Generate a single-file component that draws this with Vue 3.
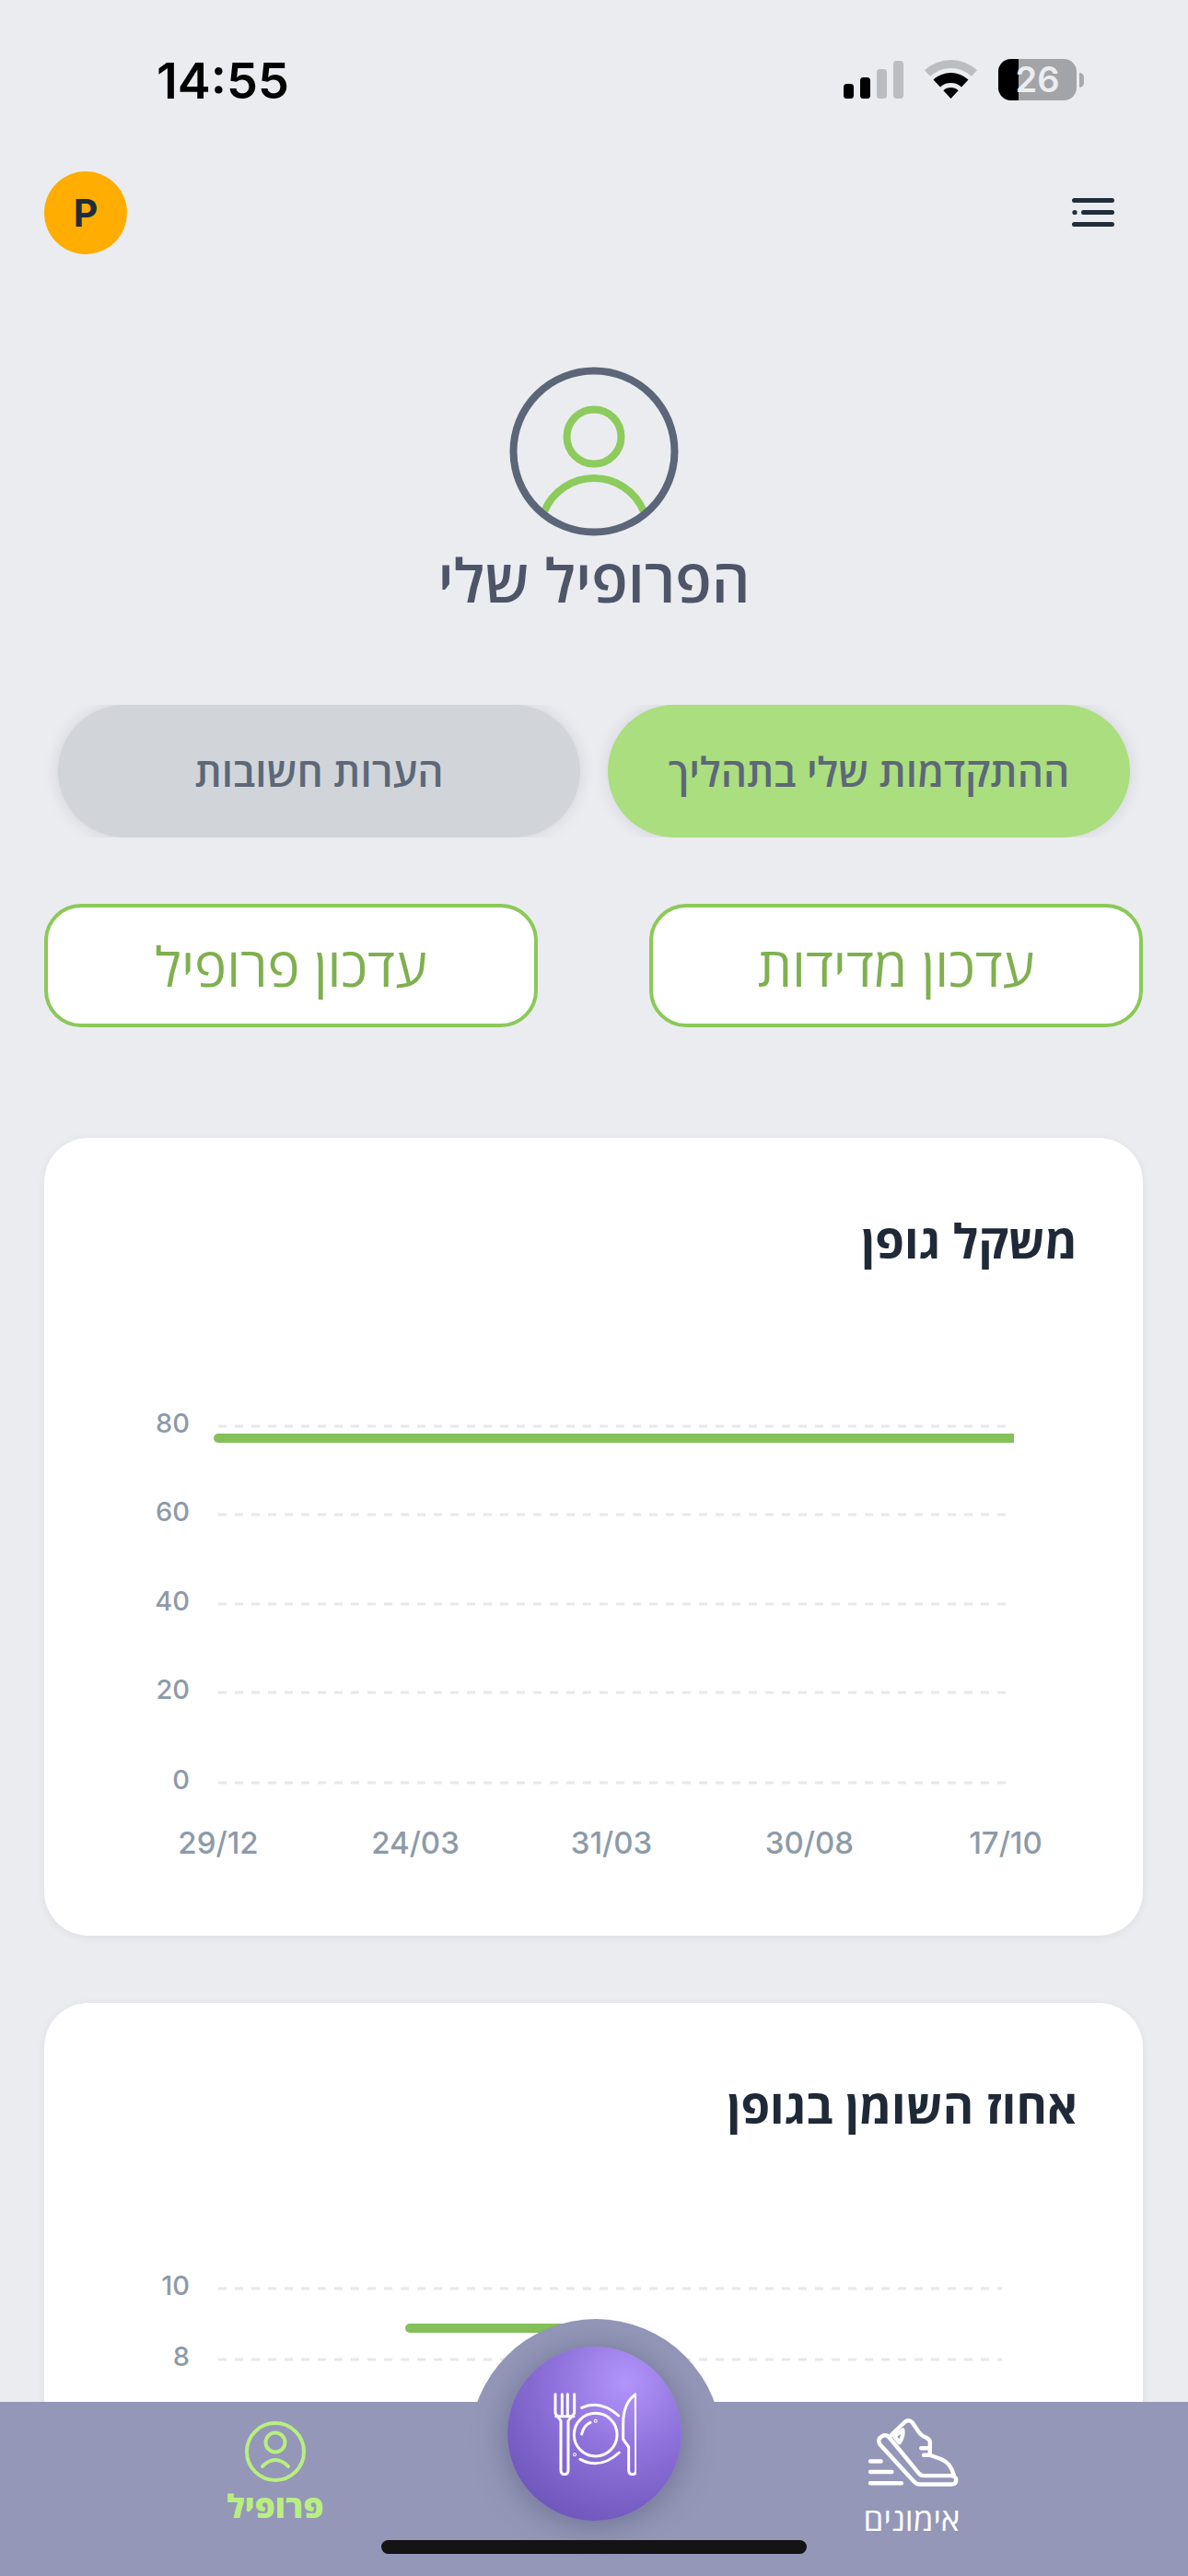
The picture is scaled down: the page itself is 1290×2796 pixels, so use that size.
<script setup>
const charts = [
  {
    title: 'משקל גופן',
    height: 866,
    grid: [
      { label: '80', y: 313 },
      { label: '60', y: 409 },
      { label: '40', y: 506 },
      { label: '20', y: 602 },
      { label: '0', y: 700 }
    ],
    gridEnd: 1044,
    line: { x1: 189, x2: 1053, y: 326 },
    dates: [
      { label: '29/12', x: 189 },
      { label: '24/03', x: 403 },
      { label: '31/03', x: 616 },
      { label: '30/08', x: 831 },
      { label: '17/10', x: 1044 }
    ],
    dateY: 777
  },
  {
    title: 'אחוז השומן בגופן',
    height: 866,
    grid: [
      { label: '10', y: 310 },
      { label: '8', y: 387 },
      { label: '6', y: 464 }
    ],
    gridEnd: 1040,
    line: { x1: 397, x2: 600, y: 353 },
    dates: [],
    dateY: 777
  }
]
</script>

<template>
  <div class="page">
    <div class="status">
      <span class="time">14:55</span>
      <div class="status-icons">
        <svg class="signal" width="65" height="41" viewBox="0 0 65 41">
          <rect x="0" y="25" width="11" height="16" rx="3.5" fill="#000" />
          <rect x="18" y="18" width="11" height="23" rx="3.5" fill="#000" />
          <rect x="36" y="9" width="11" height="32" rx="3.5" fill="#bcbdc1" />
          <rect x="54" y="0" width="11" height="41" rx="3.5" fill="#bcbdc1" />
        </svg>
        <svg class="wifi" width="57" height="42" viewBox="0 0 57 42">
          <path d="M0 11.15A42 42 0 0 1 57 11.15L50.9 17.8A33 33 0 0 0 6.1 17.8Z" fill="#bcbdc1" />
          <path d="M9.5 21.4A28 28 0 0 1 47.5 21.4L40 29.5A17 17 0 0 0 17 29.5Z" fill="#000" />
          <path d="M20.4 33.2A12 12 0 0 1 36.6 33.2L28.5 42Z" fill="#000" />
        </svg>
        <div class="battery">
          <div class="battery-body">
            <div class="battery-fill"></div>
            <span class="battery-text">26</span>
          </div>
          <div class="battery-tip"></div>
        </div>
      </div>
    </div>

    <div class="topbar">
      <div class="avatar">P</div>
      <svg class="menu" width="47" height="32" viewBox="0 0 47 32">
        <rect x="0" y="0" width="46" height="5" rx="2.5" fill="#212d3b" />
        <circle cx="3" cy="15.5" r="2.6" fill="#212d3b" />
        <rect x="10" y="13" width="36" height="5" rx="2.5" fill="#212d3b" />
        <rect x="0" y="26" width="46" height="5" rx="2.5" fill="#212d3b" />
      </svg>
    </div>

    <div class="hero">
      <svg width="184" height="184" viewBox="0 0 184 184">
        <circle cx="92" cy="76" r="29.5" fill="none" stroke="#8ccb5c" stroke-width="8" />
        <path d="M38 157A58.5 58.5 0 0 1 146 157" fill="none" stroke="#8ccb5c" stroke-width="8" />
        <circle cx="92" cy="92" r="87.5" fill="none" stroke="#5b6678" stroke-width="8" />
      </svg>
      <h1 class="hero-title">הפרופיל שלי</h1>
    </div>

    <div class="tabs">
      <button class="tab tab-active">ההתקדמות שלי בתהליך</button>
      <button class="tab tab-idle">הערות חשובות</button>
    </div>

    <div class="actions">
      <button class="action">עדכון מדידות</button>
      <button class="action">עדכון פרופיל</button>
    </div>

    <section v-for="chart in charts" :key="chart.title" class="card">
      <h2 class="card-title">{{ chart.title }}</h2>
      <svg class="chart" width="1193" :height="chart.height" :viewBox="`0 0 1193 ${chart.height}`">
        <g v-for="row in chart.grid" :key="row.label">
          <line x1="189" :x2="chart.gridEnd" :y1="row.y" :y2="row.y" stroke="#e6e8ec" stroke-width="3" stroke-dasharray="9 9" />
          <text x="158" :y="row.y + 7" class="axis" text-anchor="end">{{ row.label }}</text>
        </g>
        <path :d="`M${chart.line.x1} ${chart.line.y}H${chart.line.x2}`" stroke="#85c05a" stroke-width="10" fill="none" />
        <circle :cx="chart.line.x1" :cy="chart.line.y" r="5" fill="#85c05a" />
        <text v-for="d in chart.dates" :key="d.label" :x="d.x" :y="chart.dateY" class="axis date" text-anchor="middle">{{ d.label }}</text>
      </svg>
    </section>

    <nav class="nav">
      <div class="hump"></div>
      <div class="nav-item nav-profile">
        <svg width="66" height="66" viewBox="0 0 66 66">
          <circle cx="33" cy="33" r="31" fill="none" stroke="#b9ee80" stroke-width="4" />
          <circle cx="33" cy="23" r="10.5" fill="none" stroke="#b9ee80" stroke-width="4" />
          <path d="M19 49Q33 35 47 49" fill="none" stroke="#b9ee80" stroke-width="4" stroke-linecap="round" />
        </svg>
        <span class="nav-label nav-label-active">פרופיל</span>
      </div>
      <button class="fab">
        <svg width="90" height="90" viewBox="298 293 270 270" fill="none" stroke="#fff" stroke-width="9" stroke-linecap="round" stroke-linejoin="round">
          <path d="M304 298V360L322 385V546Q322 559 334 559Q346 559 346 546V385L366 360V298" />
          <path d="M326 298V368M344 298V368M306 370H364" />
          <circle cx="435" cy="430" r="70" />
          <path d="M390 342Q450 315 510 368M385 510Q450 545 512 488" />
          <path d="M390 428Q396 400 418 390" />
          <circle cx="435" cy="385" r="1.5" />
          <circle cx="367" cy="495" r="1.5" />
          <path d="M566 298Q525 325 525 395V445L543 470V546Q543 559 555 559Q567 559 567 546Z" />
        </svg>
      </button>
      <div class="nav-item nav-workouts">
        <svg class="shoe" width="100" height="76" viewBox="135 74 295 220" fill="none" stroke="#fff" stroke-width="13" stroke-linecap="round" stroke-linejoin="round">
          <path d="M178 132Q192 124 202 136L296 250Q302 258 312 258H400Q416 260 416 272Q416 286 400 286H300Q288 286 280 276L172 158Q162 142 178 132Z" />
          <path d="M208 128L252 86Q264 76 276 88L296 118Q304 130 320 136Q332 142 332 150V192L370 206Q398 218 408 254" />
          <path d="M245 112Q248 132 234 152L218 132Z" />
          <path d="M304 170H332M312 192H332" />
          <path d="M141 212H175M141 246H210M141 282H241" />
        </svg>
        <span class="nav-label">אימונים</span>
      </div>
      <div class="home-indicator"></div>
    </nav>
  </div>
</template>

<style>
html, body { margin: 0; padding: 0; background: #ebecf0; }
</style>

<style scoped>
.page {
  position: relative;
  width: 1290px;
  height: 2796px;
  overflow: hidden;
  background: #ebecf0;
  font-family: "Open Sans", "Liberation Sans", sans-serif;
  color: #1f2937;
}
button { font-family: inherit; padding: 0; cursor: pointer; }

.status {
  height: 186px;
  box-sizing: border-box;
  padding: 64px 113px 0 170px;
  display: flex;
  justify-content: space-between;
  align-items: flex-start;
}
.time {
  font-family: Inter, sans-serif;
  font-weight: 600;
  font-size: 54px;
  line-height: 48px;
  color: #000;
}
.status-icons { display: flex; align-items: flex-start; }
.signal { margin-top: 2px; }
.wifi { margin-left: 23px; margin-top: 1px; }
.battery { display: flex; align-items: center; margin-left: 23px; }
.battery-body {
  position: relative;
  width: 85px;
  height: 45px;
  border-radius: 14px;
  overflow: hidden;
  background: #a3a4a8;
  display: flex;
  align-items: center;
  justify-content: center;
}
.battery-fill { position: absolute; left: 0; top: 0; bottom: 0; width: 22px; background: #000; }
.battery-text {
  position: relative;
  font-family: Inter, sans-serif;
  font-weight: 600;
  font-size: 38px;
  line-height: 45px;
  color: #ecedf0;
}
.battery-tip { width: 5px; height: 16px; margin-left: 3px; background: #a9aaae; border-radius: 0 8px 8px 0; }

.topbar {
  height: 90px;
  padding: 0 79px 0 48px;
  display: flex;
  justify-content: space-between;
  align-items: center;
}
.avatar {
  width: 90px;
  height: 90px;
  border-radius: 50%;
  background: #ffad00;
  color: #1f2d3a;
  font-family: Inter, sans-serif;
  font-weight: 700;
  font-size: 41px;
  display: flex;
  align-items: center;
  justify-content: center;
}

.hero {
  margin-top: 122px;
  display: flex;
  flex-direction: column;
  align-items: center;
  height: 367px;
}
.hero svg { display: block; }
.hero-title {
  margin: 2px 0 0;
  font-size: 65px;
  line-height: 90px;
  font-weight: 600;
  color: #4f5568;
  direction: rtl;
}

.tabs {
  margin: 0 48px;
  height: 144px;
  padding: 0 15px;
  display: flex;
  flex-direction: row;
  gap: 30px;
  direction: rtl;
  overflow: hidden;
}
.tab {
  flex: 1;
  border: none;
  height: 144px;
  border-radius: 72px;
  font-size: 44px;
  font-weight: 600;
  color: #5c6878;
  box-shadow: 0 0 16px rgba(120, 125, 145, 0.22);
}
.tab-active { background: #abde7e; }
.tab-idle { background: #d1d5da; }

.actions {
  margin: 72px 49px 0 48px;
  display: flex;
  justify-content: space-between;
  direction: rtl;
}
.action {
  width: 536px;
  height: 134px;
  box-sizing: border-box;
  border: 4px solid #8bc958;
  border-radius: 40px;
  background: #fff;
  font-size: 59px;
  font-weight: 400;
  color: #7fb04f;
}

.card {
  margin: 120px 48px 0;
  width: 1193px;
  height: 866px;
  border-radius: 48px;
  background: #fff;
  box-shadow: 0 2px 10px rgba(40, 50, 70, 0.07);
  position: relative;
}
.card + .card { margin-top: 73px; }
.card-title {
  position: absolute;
  right: 71px;
  top: 76px;
  margin: 0;
  font-size: 51px;
  line-height: 70px;
  font-weight: 700;
  color: #1f2937;
  direction: rtl;
}
.chart { display: block; }
.axis {
  font-family: Inter, sans-serif;
  font-size: 29px;
  font-weight: 500;
  fill: #8d9aa9;
}
.date { font-size: 33px; }

.nav {
  position: absolute;
  left: 0;
  right: 0;
  bottom: 0;
  height: 189px;
  background: #9497b8;
}
.hump {
  position: absolute;
  left: 510px;
  top: -90px;
  width: 274px;
  height: 274px;
  border-radius: 50%;
  background: #9497b8;
}
.fab {
  position: absolute;
  left: 551px;
  top: -60px;
  width: 189px;
  height: 189px;
  border: none;
  border-radius: 50%;
  background: radial-gradient(circle at 68% 20%, #b295fb 0%, #9072dc 38%, #6f58bc 80%, #6a55b8 100%);
  box-shadow: 0 4px 34px rgba(70, 75, 105, 0.5);
  display: flex;
  align-items: center;
  justify-content: center;
}
.nav-item {
  position: absolute;
  display: flex;
  flex-direction: column;
  align-items: center;
}
.nav-profile { left: 199px; width: 200px; top: 21px; }
.nav-workouts { left: 890px; width: 200px; top: 17px; }
.shoe { margin-left: 6px; }
.nav-label { font-size: 35px; line-height: 40px; color: #fff; direction: rtl; margin-top: 14px; font-weight: 500; }
.nav-label-active { font-weight: 800; color: #b9ee80; margin-top: 6px; }
.home-indicator {
  position: absolute;
  left: 414px;
  top: 150px;
  width: 462px;
  height: 15px;
  border-radius: 8px;
  background: #141414;
}
</style>
